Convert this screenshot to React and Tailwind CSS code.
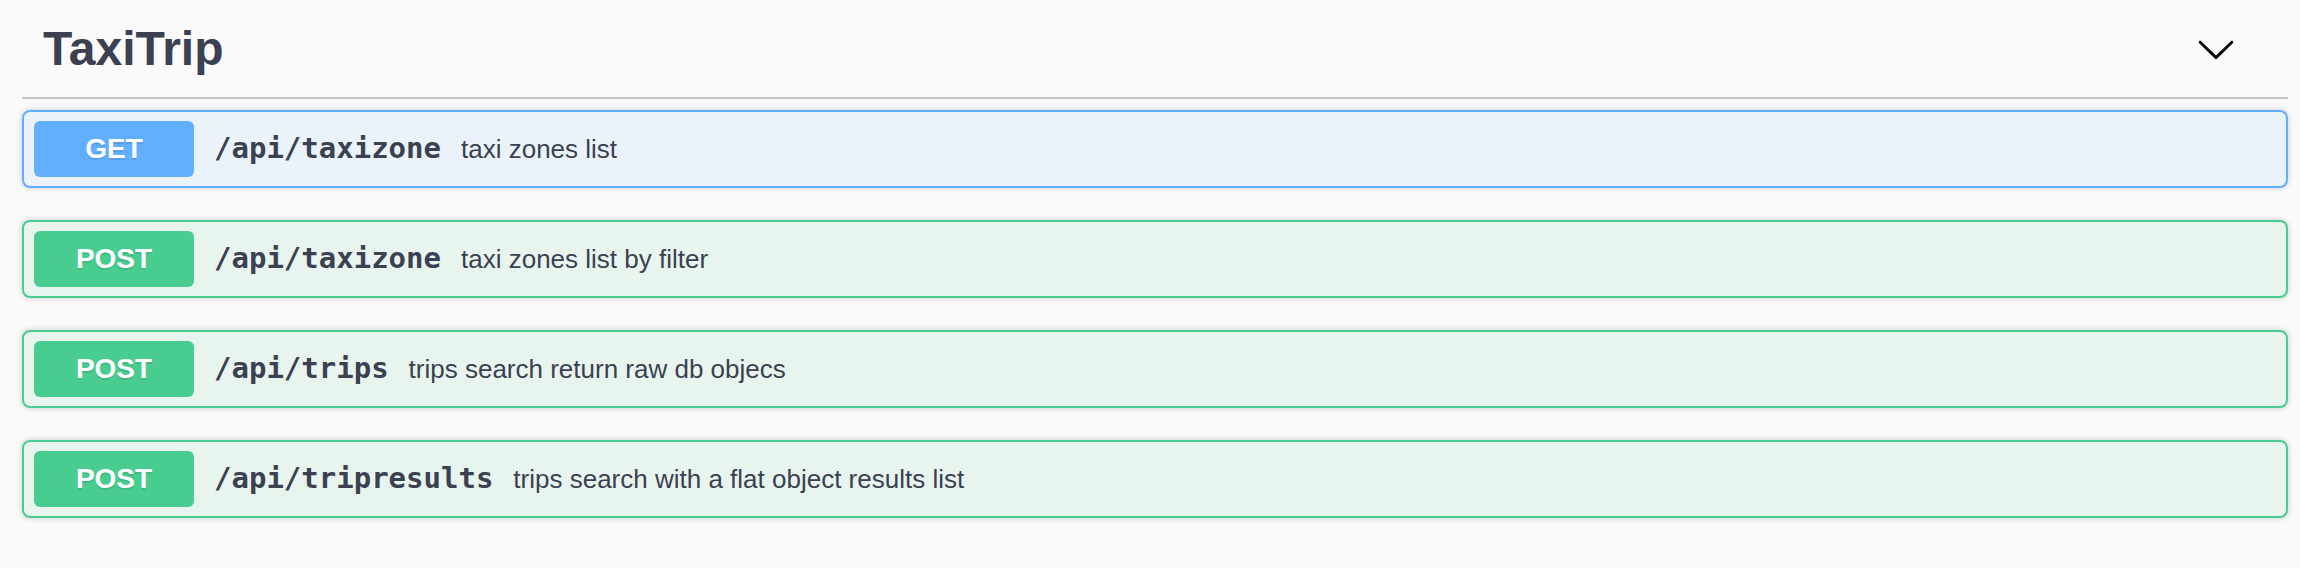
const endpoints = [
  { method: 'GET', path: '/api/taxizone', summary: 'taxi zones list' },
  { method: 'POST', path: '/api/taxizone', summary: 'taxi zones list by filter' },
  { method: 'POST', path: '/api/trips', summary: 'trips search return raw db objecs' },
  { method: 'POST', path: '/api/tripresults', summary: 'trips search with a flat object results list' },
];

const styles = {
  GET: {
    box: 'border-[#61affe] bg-[#ebf3fa]',
    badge: 'bg-[#61affe]',
  },
  POST: {
    box: 'border-[#49cc90] bg-[#e8f5ef]',
    badge: 'bg-[#49cc90]',
  },
};

const Chevron = () => (
  <svg width="40" height="40" viewBox="0 0 20 20" className="fill-black">
    <path d="M17.418 6.109c.272-.268.709-.268.979 0s.271.701 0 .969l-7.908 7.83c-.27.268-.707.268-.979 0l-7.908-7.83c-.27-.268-.27-.701 0-.969.271-.268.709-.268.979 0L10 13.25l7.418-7.141z" />
  </svg>
);

const Operation = ({ method, path, summary }) => {
  const s = styles[method];
  return (
    <div className={`flex h-[78px] items-center rounded-lg border-2 px-[10px] shadow-[0_0_6px_rgba(0,0,0,0.19)] ${s.box}`}>
      <span
        className={`flex h-[56px] w-[160px] shrink-0 items-center justify-center rounded-md text-[28px] font-bold text-white [text-shadow:0_2px_0_rgba(0,0,0,0.1)] ${s.badge}`}
        style={{ fontFamily: '"Liberation Sans", Arial, sans-serif' }}
      >
        {method}
      </span>
      <span
        className="px-[20px] text-[29px] font-bold text-[#3b4151]"
        style={{ fontFamily: '"DejaVu Sans Mono", "Liberation Mono", monospace' }}
      >
        {path}
      </span>
      <span
        className="text-[26px] text-[#3b4151]"
        style={{ fontFamily: '"Liberation Sans", Arial, sans-serif' }}
      >
        {summary}
      </span>
    </div>
  );
};

export default function App() {
  return (
    <div className="min-h-[568px] w-full bg-[#fafafa] pl-[22px] pr-[12px]">
      <div className="flex h-[99px] items-center justify-between border-b-2 border-[#c4c5ca] pl-[21px] pr-[52px]">
        <h2
          className="text-[48px] font-bold text-[#3b4151]"
          style={{ fontFamily: '"Liberation Sans", Arial, sans-serif' }}
        >
          TaxiTrip
        </h2>
        <Chevron />
      </div>
      <div className="mt-[11px] flex flex-col gap-[32px]">
        {endpoints.map((e, i) => (
          <Operation key={i} {...e} />
        ))}
      </div>
    </div>
  );
}
